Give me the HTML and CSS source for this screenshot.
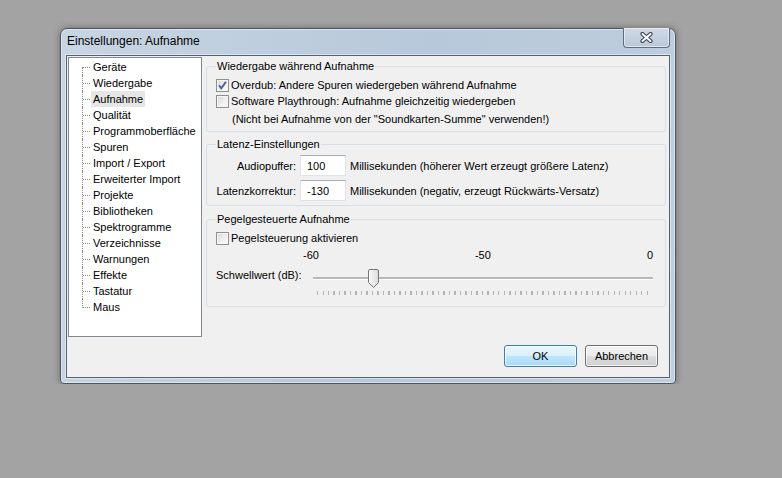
FILE: index.html
```html
<!DOCTYPE html>
<html lang="de">
<head>
    <meta charset="UTF-8">
    <title>Einstellungen: Aufnahme</title>
    <link rel="stylesheet" href="styles.css">
</head>
<body>
    <div class="dialog">
        <div class="titlebar">
            <span class="title">Einstellungen: Aufnahme</span>
            <button type="button" class="close-btn">
                <svg width="13" height="11" viewBox="0 0 13 11">
                    <path d="M2.5 2 L10.5 9 M10.5 2 L2.5 9" stroke="#3d4656" stroke-width="4.2" stroke-linecap="round"/>
                    <path d="M2.5 2 L10.5 9 M10.5 2 L2.5 9" stroke="#ffffff" stroke-width="2" stroke-linecap="round"/>
                </svg>
            </button>
        </div>

        <div class="client">
            <div class="main">
                <ul class="tree">
                    <li><span>Geräte</span></li>
                    <li><span>Wiedergabe</span></li>
                    <li><span class="selected">Aufnahme</span></li>
                    <li><span>Qualität</span></li>
                    <li><span>Programmoberfläche</span></li>
                    <li><span>Spuren</span></li>
                    <li><span>Import / Export</span></li>
                    <li><span>Erweiterter Import</span></li>
                    <li><span>Projekte</span></li>
                    <li><span>Bibliotheken</span></li>
                    <li><span>Spektrogramme</span></li>
                    <li><span>Verzeichnisse</span></li>
                    <li><span>Warnungen</span></li>
                    <li><span>Effekte</span></li>
                    <li><span>Tastatur</span></li>
                    <li><span>Maus</span></li>
                </ul>

                <div class="pages">
                    <fieldset class="group">
                        <legend>Wiedergabe während Aufnahme</legend>
                        <label class="check-row">
                            <span class="checkbox">
                                <svg width="11" height="11" viewBox="0 0 11 11">
                                    <path d="M2 5.2 L4.3 8.3 L9 1.8" fill="none" stroke="#4c5e9c" stroke-width="1.9"/>
                                </svg>
                            </span>
                            Overdub: Andere Spuren wiedergeben während Aufnahme
                        </label>
                        <label class="check-row">
                            <span class="checkbox"></span>
                            Software Playthrough: Aufnahme gleichzeitig wiedergeben
                        </label>
                        <div class="note">(Nicht bei Aufnahme von der "Soundkarten-Summe" verwenden!)</div>
                    </fieldset>

                    <fieldset class="group group-latency">
                        <legend>Latenz-Einstellungen</legend>
                        <div class="field-row">
                            <span class="field-label">Audiopuffer:</span>
                            <input type="text" class="textbox" value="100">
                            <span>Millisekunden (höherer Wert erzeugt größere Latenz)</span>
                        </div>
                        <div class="field-row">
                            <span class="field-label">Latenzkorrektur:</span>
                            <input type="text" class="textbox" value="-130">
                            <span>Millisekunden (negativ, erzeugt Rückwärts-Versatz)</span>
                        </div>
                    </fieldset>

                    <fieldset class="group group-level">
                        <legend>Pegelgesteuerte Aufnahme</legend>
                        <label class="check-row">
                            <span class="checkbox"></span>
                            Pegelsteuerung aktivieren
                        </label>
                        <div class="scale-labels">
                            <span>-60</span>
                            <span>-50</span>
                            <span>0</span>
                        </div>
                        <div class="slider-row">
                            <span class="slider-label">Schwellwert (dB):</span>
                            <div class="slider">
                                <div class="track"></div>
                                <svg class="thumb" width="11" height="19" viewBox="0 0 11 19">
                                    <defs>
                                        <linearGradient id="thumbFill" x1="0" y1="0" x2="1" y2="0">
                                            <stop offset="0" stop-color="#fbfbfb"/>
                                            <stop offset="1" stop-color="#d9d9d9"/>
                                        </linearGradient>
                                    </defs>
                                    <path d="M0.5 2 Q0.5 0.5 2 0.5 H9 Q10.5 0.5 10.5 2 V13.5 L5.5 18.5 L0.5 13.5 Z" fill="url(#thumbFill)" stroke="#767676"/>
                                </svg>
                                <div class="ticks"></div>
                            </div>
                        </div>
                    </fieldset>
                </div>
            </div>

            <div class="buttons">
                <button type="button" class="btn btn-default">OK</button>
                <button type="button" class="btn">Abbrechen</button>
            </div>
        </div>
    </div>
</body>
</html>
```

FILE: styles.css
```css
/* Desktop */
body {
    margin: 0;
    background: #a3a3a3;
    font-family: "Liberation Sans", Arial, sans-serif;
    font-size: 11px;
    color: #000;
}

/* Window frame */
.dialog {
    box-sizing: border-box;
    width: 616px;
    height: 356px;
    margin: 28px 0 0 60px;
    padding: 0 5px 5px 5px;
    border: 1px solid #4b5664;
    border-radius: 7px 7px 4px 4px;
    background: linear-gradient(100deg, #c8d5e3 0%, #b7c8da 55%, #bfcedd 100%);
    box-shadow: 0 0 7px rgba(0, 0, 0, 0.35), inset 0 0 0 1px rgba(255, 255, 255, 0.45);
}

.titlebar {
    display: flex;
    justify-content: space-between;
    align-items: flex-start;
    height: 26px;
    padding-left: 1px;
}

.title {
    font-size: 12px;
    line-height: 14px;
    padding-top: 5px;
    color: #000;
}

.close-btn {
    display: flex;
    justify-content: center;
    align-items: center;
    width: 47px;
    height: 20px;
    margin-top: -1px;
    padding: 0;
    border: 1px solid #5f6d7e;
    border-top: none;
    border-radius: 0 0 4px 4px;
    background: linear-gradient(#cfdae6, #b9c8d9);
    box-shadow: inset 0 0 0 1px rgba(255, 255, 255, 0.5);
}

/* Client area */
.client {
    box-sizing: border-box;
    height: 323px;
    border: 1px solid #56626f;
    background: #f0f0f0;
    box-shadow: 0 0 0 1px rgba(255, 255, 255, 0.45);
}

.main {
    display: flex;
    align-items: flex-start;
}

/* Tree */
.tree {
    box-sizing: border-box;
    width: 134px;
    height: 280px;
    margin: 1px 0 0 1px;
    padding: 1px 0 0 0;
    list-style: none;
    border: 1px solid #828790;
    background: #fff;
}

.tree li {
    position: relative;
    height: 16px;
    line-height: 16px;
    padding-left: 22px;
    white-space: nowrap;
}

.tree li span {
    display: inline-block;
    padding: 0 2px;
    height: 16px;
}

.tree li span.selected {
    background: #e6e6e6;
}

.tree li::before {
    content: "";
    position: absolute;
    left: 14px;
    top: 8px;
    width: 7px;
    border-top: 1px dotted #8a8a8a;
}

.tree li::after {
    content: "";
    position: absolute;
    left: 13px;
    top: 0;
    height: 16px;
    border-left: 1px dotted #8a8a8a;
}

.tree li:first-child::after {
    top: 8px;
    height: 8px;
}

.tree li:last-child::after {
    height: 9px;
}

/* Settings page */
.pages {
    display: flex;
    flex-direction: column;
    width: 460px;
    margin-left: 4px;
    padding-top: 4px;
}

.group {
    margin: 0;
    padding: 5px 0 4px 9px;
    border: 1px solid #d5dfe5;
    border-radius: 3px;
    min-width: 0;
}

.group legend {
    padding: 0 1px;
    line-height: 12px;
    color: #000;
}

.group-latency {
    margin-top: 6px;
}

.group-level {
    margin-top: 7px;
    padding-bottom: 10px;
}

.check-row {
    display: flex;
    align-items: center;
    gap: 2px;
    height: 16px;
    white-space: nowrap;
}

.checkbox {
    box-sizing: border-box;
    display: flex;
    justify-content: center;
    align-items: center;
    width: 13px;
    height: 13px;
    border: 1px solid #8e8f8f;
    background: linear-gradient(135deg, #d5d8dc 0%, #f4f4f4 70%, #fdfdfd 100%);
    box-shadow: inset 0 0 0 1px #f6f6f6;
}

.note {
    height: 16px;
    line-height: 16px;
    margin-top: 2px;
    padding-left: 16px;
    white-space: nowrap;
}

.field-row {
    display: flex;
    align-items: center;
    gap: 4px;
    height: 21px;
    white-space: nowrap;
}

.field-row + .field-row {
    margin-top: 4px;
}

.field-label {
    width: 80px;
    text-align: right;
}

.textbox {
    box-sizing: border-box;
    width: 46px;
    height: 21px;
    margin: 0;
    padding: 0 0 0 6px;
    border: 1px solid #e2e3ea;
    border-top-color: #abadb3;
    background: #fff;
    font-family: inherit;
    font-size: 11px;
    color: #000;
}

/* Threshold slider */
.scale-labels {
    display: flex;
    justify-content: space-between;
    width: 350px;
    height: 16px;
    line-height: 16px;
    margin-left: 87px;
    margin-top: 1px;
}

.slider-row {
    display: flex;
    align-items: flex-start;
    margin-top: 2px;
}

.slider-label {
    width: 97px;
    line-height: 16px;
    margin-top: 2px;
    white-space: nowrap;
}

.slider {
    position: relative;
    width: 340px;
    height: 31px;
}

.slider .track {
    position: absolute;
    left: 0;
    top: 12px;
    width: 340px;
    height: 2px;
    background: #b7b7b7;
    box-shadow: 0 1px 0 #fff;
}

.slider .thumb {
    position: absolute;
    left: 55px;
    top: 4px;
}

.slider .ticks {
    position: absolute;
    left: 4px;
    top: 26px;
    width: 331px;
    height: 4px;
    background: repeating-linear-gradient(to right, #b4b4b4 0, #b4b4b4 1px, transparent 1px, transparent 5.5px);
}

/* Buttons */
.buttons {
    display: flex;
    justify-content: flex-end;
    gap: 8px;
    margin-top: 8px;
    padding-right: 11px;
}

.btn {
    box-sizing: border-box;
    width: 73px;
    height: 22px;
    padding: 0;
    border: 1px solid #707070;
    border-radius: 3px;
    background: linear-gradient(#f2f2f2 0%, #ebebeb 48%, #dddddd 52%, #cfcfcf 100%);
    box-shadow: inset 0 0 0 1px rgba(255, 255, 255, 0.7);
    font-family: inherit;
    font-size: 11px;
    color: #000;
}

.btn-default {
    border-color: #3c7fb1;
    background: linear-gradient(#eaf6fd 0%, #d9f0fc 48%, #bee6fd 52%, #a7d9f5 100%);
    box-shadow: inset 0 0 0 1px rgba(255, 255, 255, 0.8);
}
```
